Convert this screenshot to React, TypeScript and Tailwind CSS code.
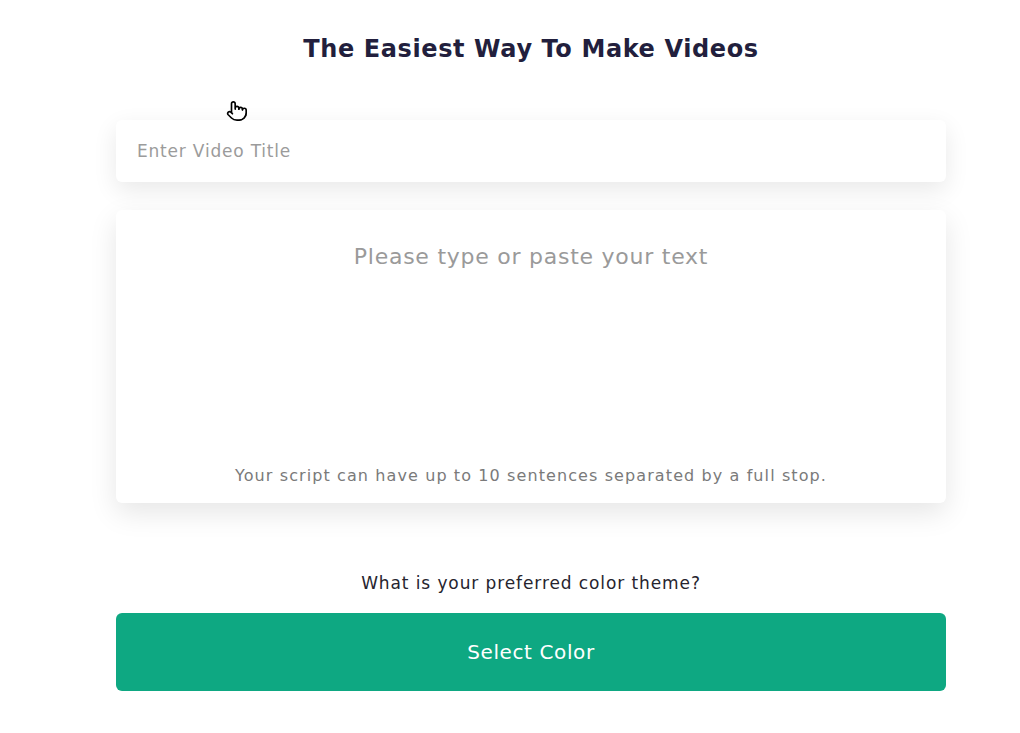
import React from 'react'
import { Pointer } from 'lucide-react'

export default function App() {
  return (
    <div
      className="relative min-h-[733px] w-[1020px] bg-white"
      style={{ fontFamily: '"DejaVu Sans", "Open Sans", sans-serif' }}
    >
      <div className="ml-[116px] flex w-[830px] flex-col pt-[33px]">
        <h1 className="text-center text-[24px] leading-[32px] font-bold tracking-[0.6px] text-[#221f3d]">
          The Easiest Way To Make Videos
        </h1>

        {/* title input */}
        <input
          type="text"
          placeholder="Enter Video Title"
          className="mt-[55px] h-[62px] w-full rounded-md bg-white px-[21px] text-[17px] tracking-[0.8px] text-[#333] shadow-[0_8px_24px_rgba(0,0,0,0.09)] outline-none placeholder:text-[#9b9b9b]"
        />

        {/* script area */}
        <div className="mt-[28px] flex h-[293px] flex-col items-center rounded-md bg-white pt-[30px] pb-[15px] shadow-[0_10px_28px_rgba(0,0,0,0.1)]">
          <textarea
            placeholder="Please type or paste your text"
            className="w-full flex-1 resize-none bg-transparent text-center text-[22px] tracking-[0.75px] text-[#333] outline-none placeholder:text-[#9a9a9a]"
          />
          <p className="text-[16px] tracking-[1.1px] text-[#7a7a7a]">
            Your script can have up to 10 sentences separated by a full stop.
          </p>
        </div>

        <p className="mt-[68px] text-center text-[17px] tracking-[0.9px] text-[#26242e]">
          What is your preferred color theme?
        </p>

        <button className="mt-[16px] h-[78px] w-full rounded-md bg-[#0ea882] text-[20px] font-medium tracking-[0.6px] text-white">
          Select Color
        </button>
      </div>

      {/* mouse cursor */}
      <Pointer className="absolute top-[100px] left-[226px] h-[22px] w-[22px] fill-white text-black" strokeWidth={1.8} />
    </div>
  )
}
